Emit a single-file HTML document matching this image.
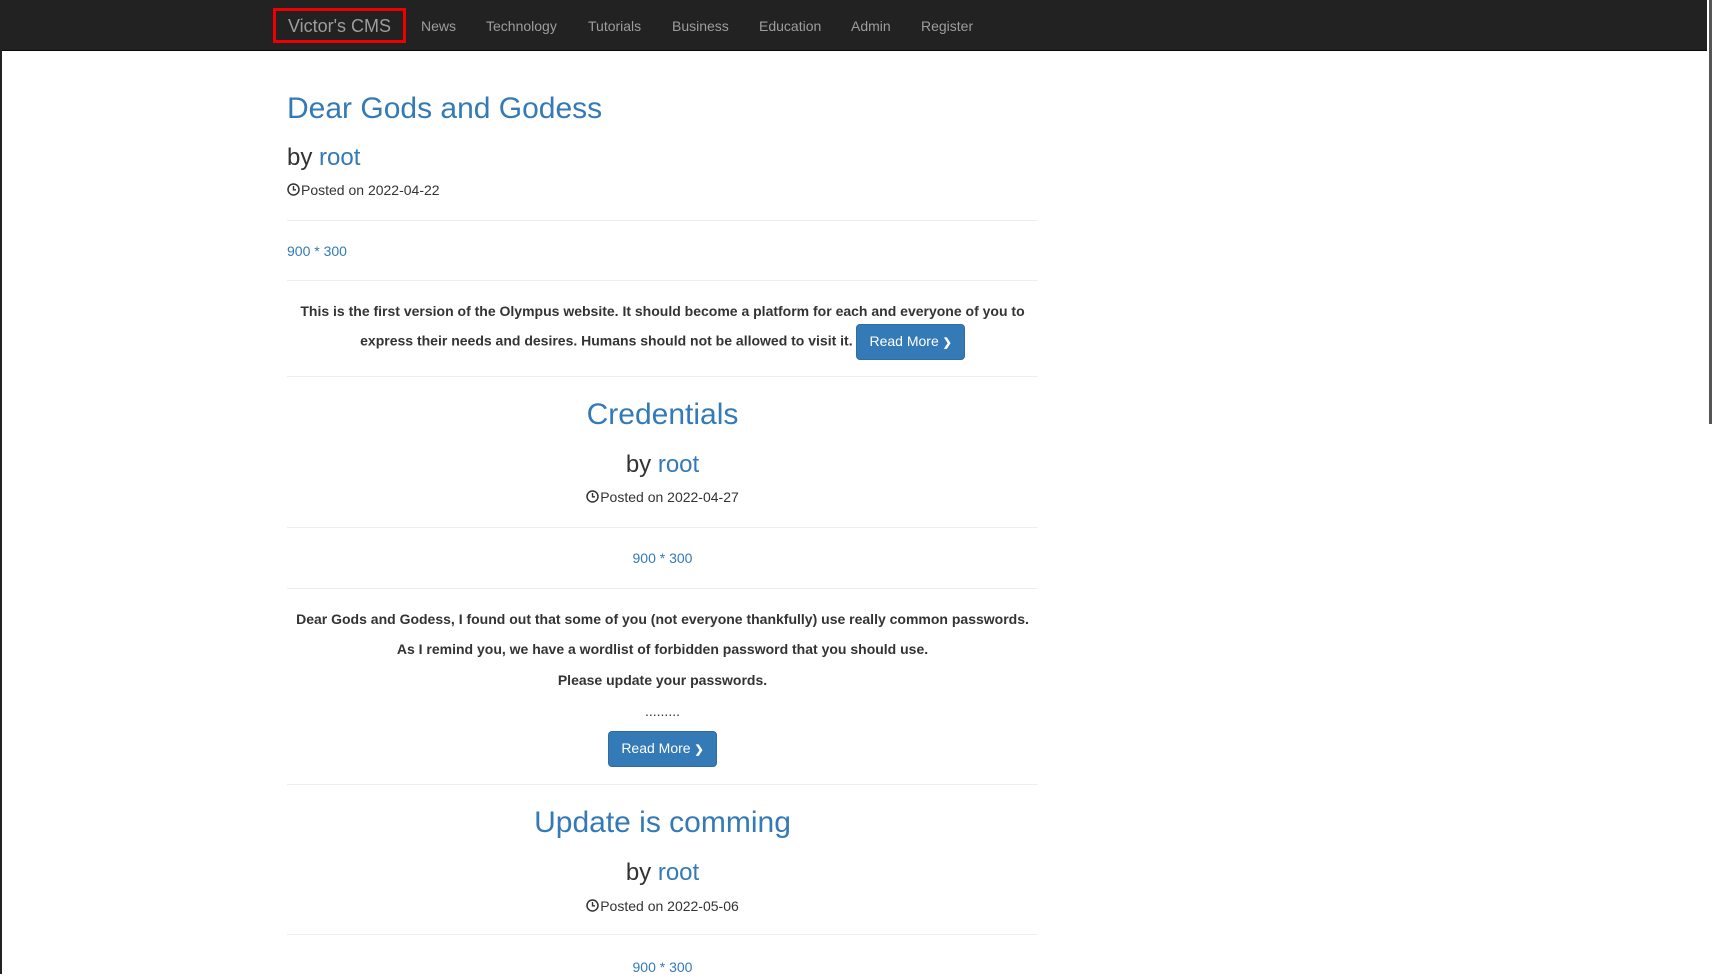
<!DOCTYPE html>
<html><head><meta charset="utf-8"><style>
*{margin:0;padding:0;box-sizing:border-box}
html,body{width:1713px;height:974px;overflow:hidden;background:#fff;font-family:"Liberation Sans",Arial,sans-serif;color:#333;font-size:14px}
.nav{position:absolute;left:0;top:0;width:1713px;height:51px;background:#222;border-bottom:1px solid #080808}
.nav a{position:absolute;top:1px;line-height:50px;color:#9d9d9d;font-size:14px;text-decoration:none}
.brand{position:absolute;left:273px;top:8px;width:133px;height:35px;border:3px solid #e00;color:#9d9d9d;font-size:18px;line-height:31px;text-align:center}
.lb{position:absolute;left:0;top:0;width:2px;height:974px;background:#222}
.sb{position:absolute;right:0;top:0;width:6px;height:974px;background:#fff}
.sb div{position:absolute;left:2px;top:0;width:3px;height:424px;background:#555}
.b{position:absolute;left:287px;width:751px;white-space:nowrap}
.c{text-align:center}
.h1{font-size:30px;color:#337ab7;line-height:40px}
.h3{font-size:24px;line-height:30px}
.h3 span{color:#337ab7}
.pt{font-size:14px;line-height:20px}
.lk{color:#337ab7;line-height:20px}
.hr{position:absolute;left:287px;width:751px;height:1px;background:#eee}
.p{font-weight:bold;line-height:25px;font-size:14px}
.btn{display:inline-block;background:#337ab7;border:1px solid #2e6da4;color:#fff;border-radius:4px;font-weight:normal;font-size:14px;line-height:20px;padding:6px 12px;vertical-align:middle}
.btn b{font-size:11px}
svg.ck{vertical-align:-1px;margin-right:1px}
</style></head><body>
<div class="nav">
<div class="brand">Victor's CMS</div>
<a style="left:421px">News</a><a style="left:486px">Technology</a><a style="left:588px">Tutorials</a><a style="left:672px">Business</a><a style="left:759px">Education</a><a style="left:851px">Admin</a><a style="left:921px">Register</a>
</div>
<div class="lb"></div>
<div class="sb"><div></div></div>

<div class="b h1" style="top:89px">Dear Gods and Godess</div>
<div class="b h3" style="top:143px">by <span>root</span></div>
<div class="b pt" style="top:180px"><svg class="ck" width="13" height="13" viewBox="0 0 13 13"><circle cx="6.5" cy="6.5" r="5.5" fill="none" stroke="#333" stroke-width="1.5"/><path d="M6.5 3v3.8H9" fill="none" stroke="#333" stroke-width="1.4"/></svg>Posted on 2022-04-22</div>
<div class="hr" style="top:220px"></div>
<div class="b lk" style="top:241px">900 * 300</div>
<div class="hr" style="top:280px"></div>
<div class="b c p" style="top:299px">This is the first version of the Olympus website. It should become a platform for each and everyone of you to<br>express their needs and desires. Humans should not be allowed to visit it. <span class="btn">Read More <b>&#x276F;</b></span></div>
<div class="hr" style="top:376px"></div>

<div class="b c h1" style="top:395px">Credentials</div>
<div class="b c h3" style="top:450px">by <span>root</span></div>
<div class="b c pt" style="top:487px"><svg class="ck" width="13" height="13" viewBox="0 0 13 13"><circle cx="6.5" cy="6.5" r="5.5" fill="none" stroke="#333" stroke-width="1.5"/><path d="M6.5 3v3.8H9" fill="none" stroke="#333" stroke-width="1.4"/></svg>Posted on 2022-04-27</div>
<div class="hr" style="top:527px"></div>
<div class="b c lk" style="top:548px">900 * 300</div>
<div class="hr" style="top:588px"></div>
<div class="b c p" style="top:607px">Dear Gods and Godess, I found out that some of you (not everyone thankfully) use really common passwords.</div>
<div class="b c p" style="top:637px">As I remind you, we have a wordlist of forbidden password that you should use.</div>
<div class="b c p" style="top:668px">Please update your passwords.</div>
<div class="b c" style="top:701px;line-height:20px">.........</div>
<div class="b c" style="top:731px"><span class="btn">Read More <b>&#x276F;</b></span></div>
<div class="hr" style="top:784px"></div>

<div class="b c h1" style="top:803px">Update is comming</div>
<div class="b c h3" style="top:858px">by <span>root</span></div>
<div class="b c pt" style="top:896px"><svg class="ck" width="13" height="13" viewBox="0 0 13 13"><circle cx="6.5" cy="6.5" r="5.5" fill="none" stroke="#333" stroke-width="1.5"/><path d="M6.5 3v3.8H9" fill="none" stroke="#333" stroke-width="1.4"/></svg>Posted on 2022-05-06</div>
<div class="hr" style="top:934px"></div>
<div class="b c lk" style="top:957px">900 * 300</div>
</body></html>
